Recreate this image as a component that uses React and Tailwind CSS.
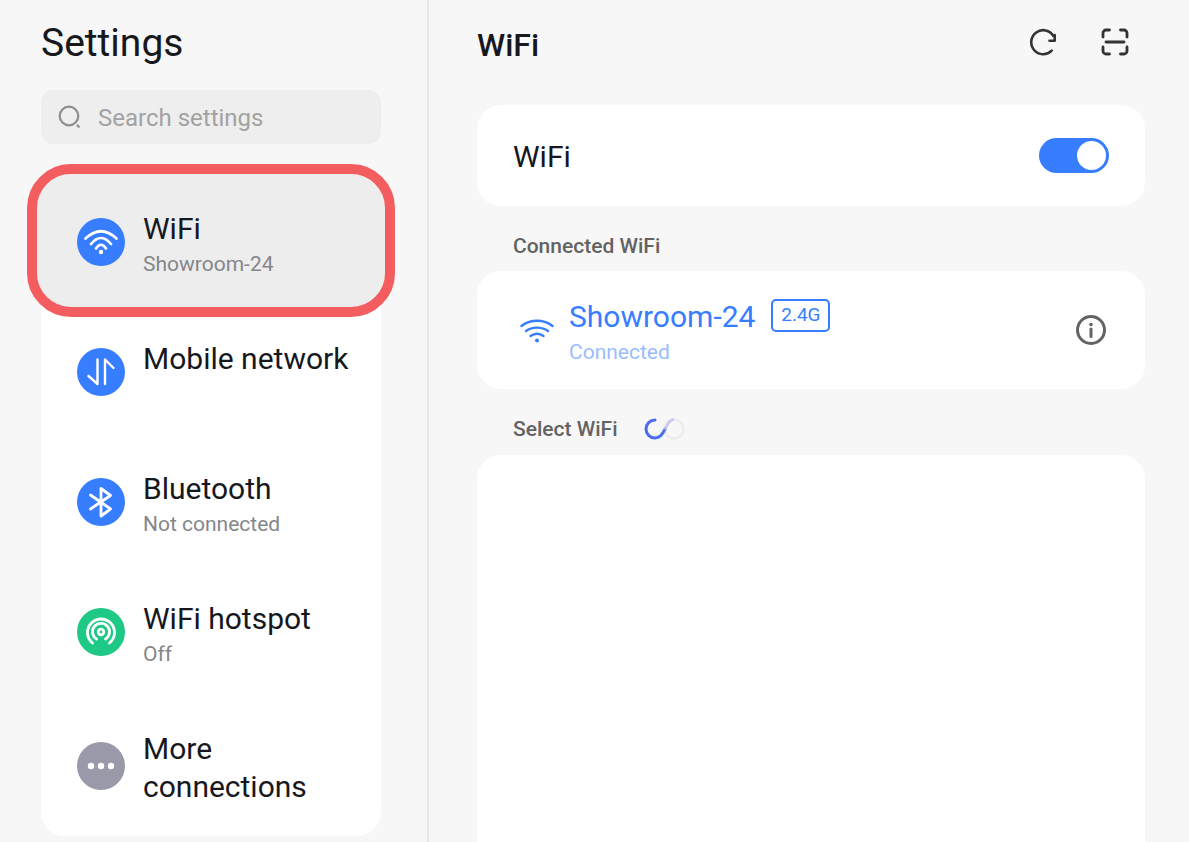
const font = { fontFamily: 'Roboto, sans-serif' };

function IconCircle({ bg, children }) {
  return (
    <div className={`w-12 h-12 rounded-full flex items-center justify-center shrink-0 ${bg}`}>
      <svg width="48" height="48" viewBox="0 0 48 48" fill="none" stroke="white" strokeLinecap="round" strokeLinejoin="round">
        {children}
      </svg>
    </div>
  );
}

const WifiGlyph = (
  <g strokeWidth="2.700">
    <path d="M8.500 20.500Q24 6 39.500 20.500" />
    <path d="M14 26Q24 14 34 26" />
    <path d="M19 30.500Q24 23 29 30.500" />
    <circle cx="24" cy="34" r="2.200" fill="white" stroke="none" />
  </g>
);

function Row({ icon, title, sub, className = '', selected }) {
  return (
    <div className={`relative flex items-center gap-[18px] pl-9 pr-4 pt-[2px] ${className}`}>
      {selected && (
        <div className="absolute -left-[4px] -right-[4px] -top-[2px] -bottom-[1px] bg-[#ededed] rounded-[34px] outline-[10.500px] outline-solid outline-[#f45d5f]" />
      )}
      <div className="relative">{icon}</div>
      <div className="relative self-start pt-[32px]">
        <div className="text-[30px] leading-[38px] text-[#16181d]">{title}</div>
        {sub && <div className="text-[21px] leading-[28px] mt-[2px] text-[#85868a]">{sub}</div>}
      </div>
    </div>
  );
}

export default function App() {
  return (
    <div style={font} className="w-[1189px] h-[842px] overflow-hidden bg-[#f7f7f7] flex">
      <aside className="w-[429px] shrink-0 border-r-2 border-[#e6e6e6] pl-[41px] pr-[47px]">
        <h1 className="text-[39px] leading-[44px] pt-[21px] text-[#16181d] font-normal">Settings</h1>
        <div className="mt-[25px] h-[54px] w-[340px] rounded-[12px] bg-[#eeeeee] flex items-center pl-[17px] gap-[16px]">
          <svg width="24" height="24" viewBox="0 0 24 24" fill="none" stroke="#8d8d8d" strokeWidth="2.200" strokeLinecap="round">
            <circle cx="11" cy="11" r="9.300" />
            <path d="M19.500 20.500L20.800 21.800" />
          </svg>
          <span className="text-[24px] pt-[2px] text-[#a2a2a2]">Search settings</span>
        </div>
        <div className="mt-[32px] w-[340px] h-[660px] bg-white rounded-[24px] flex flex-col">
          <Row
            selected
            className="h-[130px]"
            icon={<IconCircle bg="bg-[#377dff]">{WifiGlyph}</IconCircle>}
            title="WiFi"
            sub="Showroom-24"
          />
          <Row
            className="h-[130px]"
            icon={
              <IconCircle bg="bg-[#377dff]">
                <g strokeWidth="2.400">
                  <path d="M20.500 11.500V36L11.500 28" />
                  <path d="M28 36V11.500L36.500 20" />
                </g>
              </IconCircle>
            }
            title="Mobile network"
          />
          <Row
            className="h-[130px]"
            icon={
              <IconCircle bg="bg-[#377dff]">
                <path strokeWidth="2.800" d="M13.500 17L33.500 31L24 38V10.500L33.500 17.500L13.500 31" />
              </IconCircle>
            }
            title="Bluetooth"
            sub="Not connected"
          />
          <Row
            className="h-[130px]"
            icon={
              <IconCircle bg="bg-[#1dc984]">
                <g strokeWidth="2.800">
                  <path d="M15.500 35A13.500 13.500 0 1 1 32.500 35" />
                  <path d="M19.500 31A8.500 8.500 0 1 1 28.500 31" />
                  <circle cx="24" cy="24" r="2.800" />
                </g>
              </IconCircle>
            }
            title="WiFi hotspot"
            sub="Off"
          />
          <Row
            className="h-[140px] pb-[2px]"
            icon={
              <IconCircle bg="bg-[#9999a9]">
                <g fill="white" stroke="none">
                  <circle cx="14" cy="24" r="3.200" />
                  <circle cx="24" cy="24" r="3.200" />
                  <circle cx="34" cy="24" r="3.200" />
                </g>
              </IconCircle>
            }
            title={<>More<br />connections</>}
          />
        </div>
      </aside>

      <main className="flex-1 pl-[48px] pr-[44px]">
        <header className="h-[105px] flex items-start">
          <h2 className="text-[32px] leading-[40px] pt-[25px] box-content font-medium text-[#16181d] flex-1">WiFi</h2>
          <div className="flex items-center gap-[44px] pt-[28px] pr-[16px]">
            <svg width="28" height="28" viewBox="0 0 28 28" fill="none" stroke="#333333" strokeWidth="2.600" strokeLinecap="round" strokeLinejoin="round">
              <path d="M22.700 22.700A12 12 0 1 1 24.500 8" />
              <path d="M20.500 12.700H25.700V7" />
            </svg>
            <svg width="28" height="28" viewBox="0 0 28 28" fill="none" stroke="#333333" strokeWidth="2.800" strokeLinecap="round" strokeLinejoin="round">
              <path d="M2 9V5A3 3 0 0 1 5 2H8.500" />
              <path d="M19.500 2H23A3 3 0 0 1 26 5V9" />
              <path d="M2 19V23A3 3 0 0 0 5 26H8.500" />
              <path d="M19.500 26H23A3 3 0 0 0 26 23V19" />
              <path d="M5 14H23" />
            </svg>
          </div>
        </header>

        <section className="h-[101px] bg-white rounded-[24px] flex items-center justify-between pl-[36px] pr-[36px]">
          <span className="text-[30px] pt-[2px] text-[#16181d]">WiFi</span>
          <div className="w-[70px] h-[35px] rounded-full bg-[#377dff] flex items-center justify-end pr-[3px]">
            <div className="w-[29px] h-[29px] rounded-full bg-white" />
          </div>
        </section>

        <div className="h-[65px] pl-[36px] pt-[26px] text-[21px] leading-[28px] font-medium text-[#636363]">Connected WiFi</div>

        <section className="h-[118px] bg-white rounded-[24px] flex items-center pl-[43px] pr-[38px]">
          <svg width="34" height="28" viewBox="0 0 34 28" fill="none" stroke="#377dff" strokeWidth="2.400" strokeLinecap="round" className="mt-[4px] shrink-0">
            <path d="M1.500 8C10 1 24 1 32.500 8" />
            <path d="M6 13C12 8.500 22 8.500 28 13" />
            <path d="M10.500 18C14.500 15.200 19.500 15.200 23.500 18" />
            <circle cx="17" cy="22.500" r="2" fill="#377dff" stroke="none" />
          </svg>
          <div className="ml-[15px] flex-1 self-start pt-[27px]">
            <div className="flex items-center gap-[15px]">
              <span className="text-[30px] leading-[38px] text-[#377dff]">Showroom-24</span>
              <span className="h-[33px] w-[59px] rounded-[5px] border-2 border-[#377dff] flex items-center justify-center text-[19px] text-[#377dff] -mt-[3px] ml-[1px]">2.4G</span>
            </div>
            <div className="text-[21px] leading-[28px] mt-[2px] text-[#99bdff]">Connected</div>
          </div>
          <svg width="32" height="32" viewBox="0 0 32 32" fill="none" className="shrink-0">
            <circle cx="16" cy="16" r="13.500" stroke="#636363" strokeWidth="3" />
            <circle cx="16" cy="10.500" r="1.800" fill="#636363" />
            <path d="M16 15V22.500" stroke="#636363" strokeWidth="3" strokeLinecap="round" />
          </svg>
        </section>

        <div className="h-[66px] pl-[36px] pt-[26px] flex items-start gap-[26px] text-[21px] leading-[28px] font-medium text-[#636363]">
          <span>Select WiFi</span>
          <svg width="42" height="24" viewBox="0 0 42 24" fill="none" className="mt-[2px]">
            <circle cx="30" cy="12" r="9.500" stroke="#ececef" strokeWidth="2.500" />
            <path d="M21.500 11.500C18.500 16 17 21 11 21C6 21 2 17 2 12C2 7 6 3 11 3" stroke="#4a6df0" strokeWidth="3" strokeLinecap="round" />
            <path d="M21.500 11.500C23 8 25 3.500 29 2.500" stroke="#c9c4f2" strokeWidth="2.500" strokeLinecap="round" />
          </svg>
        </div>

        <section className="h-[420px] bg-white rounded-[24px]" />
      </main>
    </div>
  );
}
